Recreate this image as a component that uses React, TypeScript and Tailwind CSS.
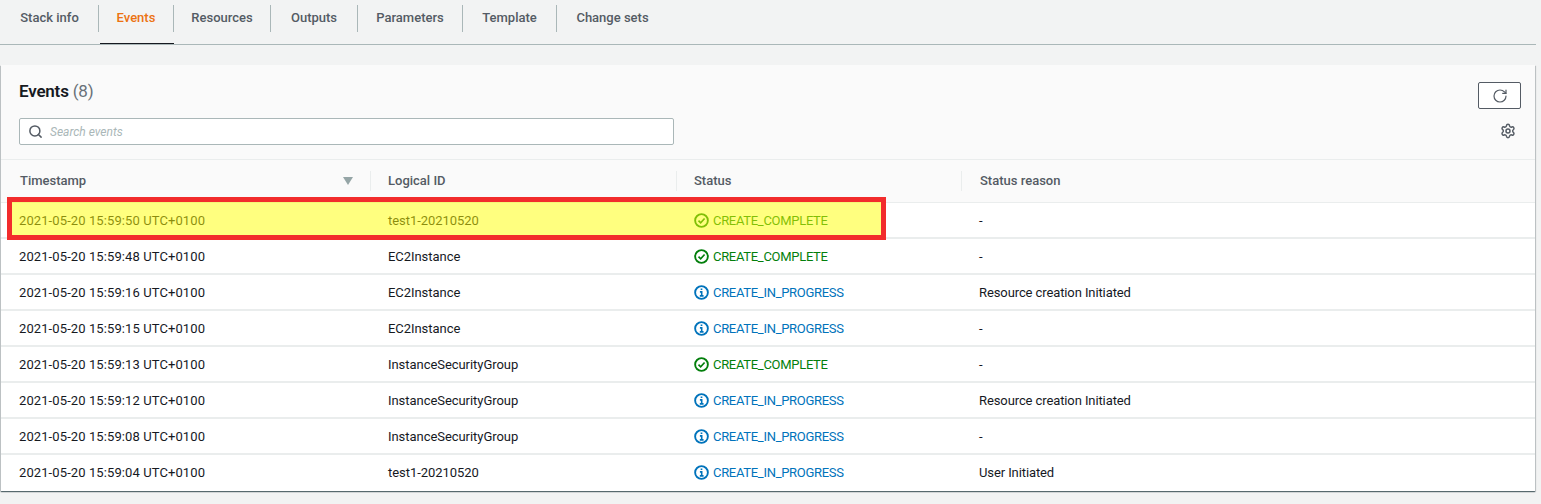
import { RotateCw, Search, Settings } from 'lucide-react';

const font = "[font-family:Roboto,sans-serif]";

const TABS = [
  { label: 'Stack info', width: 'w-[98px]' },
  { label: 'Events', width: 'w-[75px]', active: true },
  { label: 'Resources', width: 'w-[97px]' },
  { label: 'Outputs', width: 'w-[87px]' },
  { label: 'Parameters', width: 'w-[105px]' },
  { label: 'Template', width: 'w-[94px]' },
  { label: 'Change sets', width: 'w-[111px]' },
];

const EVENTS = [
  ['2021-05-20 15:59:50 UTC+0100', 'test1-20210520', 'CREATE_COMPLETE', '-'],
  ['2021-05-20 15:59:48 UTC+0100', 'EC2Instance', 'CREATE_COMPLETE', '-'],
  ['2021-05-20 15:59:16 UTC+0100', 'EC2Instance', 'CREATE_IN_PROGRESS', 'Resource creation Initiated'],
  ['2021-05-20 15:59:15 UTC+0100', 'EC2Instance', 'CREATE_IN_PROGRESS', '-'],
  ['2021-05-20 15:59:13 UTC+0100', 'InstanceSecurityGroup', 'CREATE_COMPLETE', '-'],
  ['2021-05-20 15:59:12 UTC+0100', 'InstanceSecurityGroup', 'CREATE_IN_PROGRESS', 'Resource creation Initiated'],
  ['2021-05-20 15:59:08 UTC+0100', 'InstanceSecurityGroup', 'CREATE_IN_PROGRESS', '-'],
  ['2021-05-20 15:59:04 UTC+0100', 'test1-20210520', 'CREATE_IN_PROGRESS', 'User Initiated'],
];

const COLS = 'grid grid-cols-[369px_306px_285px_1fr]';

function StatusIcon({ complete }: { complete: boolean }) {
  return (
    <svg width="15" height="15" viewBox="0 0 16 16" fill="none" stroke="currentColor" strokeWidth="2" className="shrink-0">
      <circle cx="8" cy="8" r="6.8" />
      {complete ? (
        <path d="M4.8 8.2l2.3 2.3 4.2-4.6" strokeWidth="1.8" />
      ) : (
        <path d="M6.3 7.3H8.2V11.6M6.2 11.6h4M7.1 4.5h1.8" strokeWidth="1.7" />
      )}
    </svg>
  );
}

export default function App() {
  return (
    <div className={`h-[504px] overflow-hidden bg-[#f2f3f3] text-[13px] text-[#16191f] ${font}`}>
      <div className="mr-[5px] flex h-[45px] border-b border-[#aab7b8] pl-[1px]">
        {TABS.map((tab, index) => (
          <div key={tab.label} className={`relative h-[44px] ${tab.width}`}>
            <div className={`flex h-[27px] mt-[5px] items-center justify-center pb-[1px] font-medium ${index < TABS.length - 1 ? 'border-r border-[#aab7b8]' : ''} ${tab.active ? 'text-[#ec7211]' : 'text-[#545b64]'}`}>
              {tab.label}
            </div>
            {tab.active && <div className="absolute bottom-0 left-[1px] right-0 h-[1px] bg-[#16191f]" />}
          </div>
        ))}
      </div>

      <div className="relative mt-[20px] ml-[1px] mr-[6px] h-[426px] bg-white shadow-[0_1px_1px_0_rgba(0,28,36,0.5),1px_1px_1px_0_rgba(0,28,36,0.15),-1px_1px_1px_0_rgba(0,28,36,0.15)]">
        <div className="relative h-[95px] border-b border-[#eaeded] bg-[#fafafa] px-[18px] pt-[14px]">
          <div className="text-[17px] leading-[24px] font-semibold tracking-[-0.2px]">
            Events <span className="font-normal text-[#687078]">(8)</span>
          </div>
          <div className="mt-[15px] flex h-[27px] w-[655px] items-center gap-[7px] rounded-[2px] border border-[#aab7b8] bg-white pl-[8px]">
            <Search size={15} strokeWidth={2.4} className="text-[#545b64]" />
            <span className="text-[12px] text-[#aab7b8] italic">Search events</span>
          </div>
          <div className="absolute top-[17px] right-[14px] flex h-[27px] w-[43px] items-center justify-center rounded-[2px] border border-[#545b64] bg-white">
            <RotateCw size={16} strokeWidth={1.8} className="text-[#545b64]" />
          </div>
          <Settings size={16} strokeWidth={2.2} className="absolute top-[58px] right-[19px] text-[#545b64]" />
        </div>

        <div className={`${COLS} h-[43px] items-center border-b border-[#eaeded] bg-[#fafafa] font-medium text-[#545b64]`}>
          <div className="relative h-[20px] pl-[19px] leading-[20px]">
            Timestamp
            <span className="absolute top-[6px] right-[17px] h-0 w-0 border-x-[5px] border-t-[8px] border-x-transparent border-t-[#95a5a6]" />
          </div>
          <div className="h-[20px] border-l border-[#eaeded] pl-[17px] leading-[20px]">Logical ID</div>
          <div className="h-[20px] border-l border-[#eaeded] pl-[17px] leading-[20px]">Status</div>
          <div className="h-[20px] border-l border-[#eaeded] pl-[18px] leading-[20px]">Status reason</div>
        </div>

        {EVENTS.map(([time, id, status, reason], index) => {
          const complete = status === 'CREATE_COMPLETE';
          return (
            <div key={time} className={`${COLS} h-[36px] items-center border-b-2 pt-[1px] ${index < EVENTS.length - 1 ? 'border-[#eaeded]' : 'border-transparent'}`}>
              <div className="pl-[18px] tracking-[0.1px]">{time}</div>
              <div className="pl-[18px] tracking-[-0.05px]">{id}</div>
              <div className={`flex items-center gap-[4px] pl-[18px] tracking-[-0.3px] ${complete ? 'text-[#037f0c]' : 'text-[#0073bb]'}`}>
                <StatusIcon complete={complete} />
                {status}
              </div>
              <div className="pl-[18px] tracking-[-0.1px]">{reason}</div>
            </div>
          );
        })}

        {/* annotation painted over the first row */}
        <div className="absolute top-[132px] left-[6px] h-[43px] w-[879px] border-[5px] border-[#f22c2c] bg-[#ffff00]/50" />
      </div>
    </div>
  );
}
